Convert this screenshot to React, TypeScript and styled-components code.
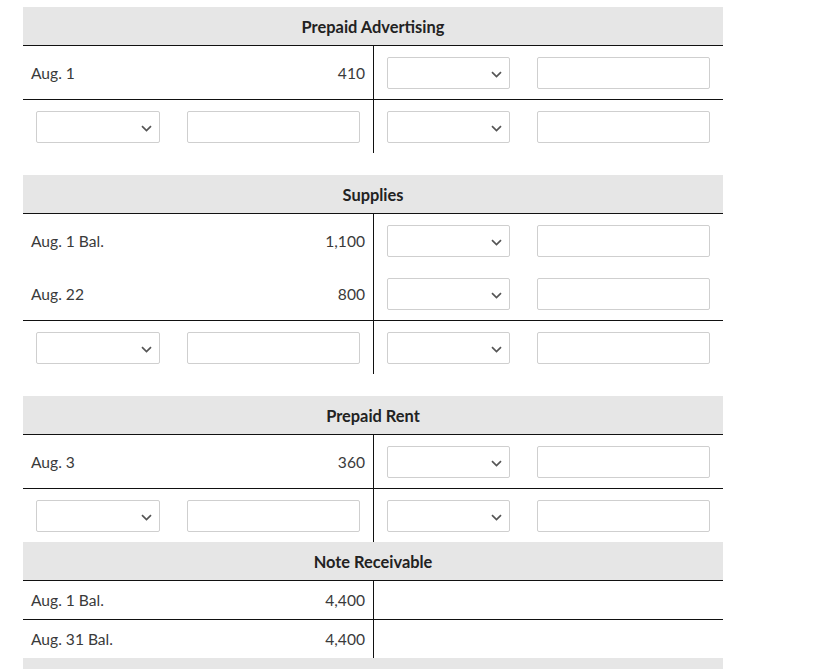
import React from "react";
import styled, { createGlobalStyle } from "styled-components";

const GlobalStyle = createGlobalStyle`
  body {
    margin: 0;
    background: #fff;
    font-family: Lato, "Open Sans", "Liberation Sans", sans-serif;
    color: #333;
  }
`;

const Page = styled.div`
  padding: 7px 0 0 23px;
  width: 700px;
`;

const Account = styled.section<{ $gap: number }>`
  margin-bottom: ${(p) => p.$gap}px;
`;

const Title = styled.div`
  height: 38px;
  background: #e6e6e6;
  border-bottom: 1px solid #111;
  display: flex;
  align-items: center;
  justify-content: center;
  font-weight: 700;
  font-size: 16.4px;
  color: #222;
`;

const Row = styled.div<{ $ruled?: boolean; $short?: boolean }>`
  display: grid;
  grid-template-columns: 150px 200px 150px 200px;
  height: ${(p) => (p.$short ? 38 : 53)}px;
  border-bottom: ${(p) => (p.$ruled ? "1px solid #111" : "none")};
`;

const Cell = styled.div<{ $side?: "left" | "right"; $divider?: boolean }>`
  display: flex;
  align-items: center;
  justify-content: ${(p) => (p.$side === "right" ? "flex-end" : "flex-start")};
  padding: 0 ${(p) => (p.$side === "right" ? 8 : 0)}px 0
    ${(p) => (p.$side === "left" ? 8 : 0)}px;
  border-left: ${(p) => (p.$divider ? "1px solid #111" : "none")};
  font-size: 15.6px;
  color: #3a3a3a;
`;

const FieldCell = styled.div<{ $divider?: boolean; $pad: number; $padR: number }>`
  display: flex;
  align-items: center;
  padding: 0 ${(p) => p.$padR}px 0 ${(p) => p.$pad}px;
  border-left: ${(p) => (p.$divider ? "1px solid #111" : "none")};
`;

const SelectBox = styled.div`
  position: relative;
  width: 124px;
  height: 32px;
  box-sizing: border-box;
  border: 1px solid #cfcfcf;
  border-radius: 2px;
  background: #fff;
`;

const Chevron = styled.svg`
  position: absolute;
  right: 7px;
  top: 13px;
`;

const TextBox = styled.input`
  width: 173px;
  height: 32px;
  box-sizing: border-box;
  border: 1px solid #cfcfcf;
  border-radius: 2px;
  outline: none;
  background: #fff;
  font-family: inherit;
  font-size: 15px;
  padding: 0 6px;
`;

function Dropdown() {
  return (
    <SelectBox>
      <Chevron width="11" height="7" viewBox="0 0 11 7">
        <path d="M1 1.2 L5.5 5.5 L10 1.2" fill="none" stroke="#555" strokeWidth="1.7" />
      </Chevron>
    </SelectBox>
  );
}

function Fields({ divider }: { divider?: boolean }) {
  return (
    <>
      <FieldCell $divider={divider} $pad={13} $padR={13}>
        <Dropdown />
      </FieldCell>
      <FieldCell $pad={14} $padR={13}>
        <TextBox />
      </FieldCell>
    </>
  );
}

type Line =
  | { kind: "entry"; label: string; amount: string; ruled?: boolean }
  | { kind: "blank"; ruled?: boolean }
  | { kind: "balance"; label: string; amount: string; ruled?: boolean };

function LineRow({ line }: { line: Line }) {
  if (line.kind === "blank") {
    return (
      <Row $ruled={line.ruled}>
        <Fields />
        <Fields divider />
      </Row>
    );
  }
  const short = line.kind === "balance";
  return (
    <Row $ruled={line.ruled} $short={short}>
      <Cell $side="left">{line.label}</Cell>
      <Cell $side="right">{line.amount}</Cell>
      {short ? (
        <>
          <Cell $divider />
          <Cell />
        </>
      ) : (
        <Fields divider />
      )}
    </Row>
  );
}

const accounts: { title: string; gap: number; lines: Line[] }[] = [
  {
    title: "Prepaid Advertising",
    gap: 22,
    lines: [
      { kind: "entry", label: "Aug. 1", amount: "410", ruled: true },
      { kind: "blank" },
    ],
  },
  {
    title: "Supplies",
    gap: 22,
    lines: [
      { kind: "entry", label: "Aug. 1 Bal.", amount: "1,100" },
      { kind: "entry", label: "Aug. 22", amount: "800", ruled: true },
      { kind: "blank" },
    ],
  },
  {
    title: "Prepaid Rent",
    gap: 0,
    lines: [
      { kind: "entry", label: "Aug. 3", amount: "360", ruled: true },
      { kind: "blank" },
    ],
  },
  {
    title: "Note Receivable",
    gap: 0,
    lines: [
      { kind: "balance", label: "Aug. 1 Bal.", amount: "4,400", ruled: true },
      { kind: "balance", label: "Aug. 31 Bal.", amount: "4,400" },
    ],
  },
];

export default function App() {
  return (
    <>
      <GlobalStyle />
      <Page>
        {accounts.map((a) => (
          <Account key={a.title} $gap={a.gap}>
            <Title>{a.title}</Title>
            {a.lines.map((l, i) => (
              <LineRow key={i} line={l} />
            ))}
          </Account>
        ))}
        <Account $gap={0}>
          <Title>&nbsp;</Title>
        </Account>
      </Page>
    </>
  );
}
